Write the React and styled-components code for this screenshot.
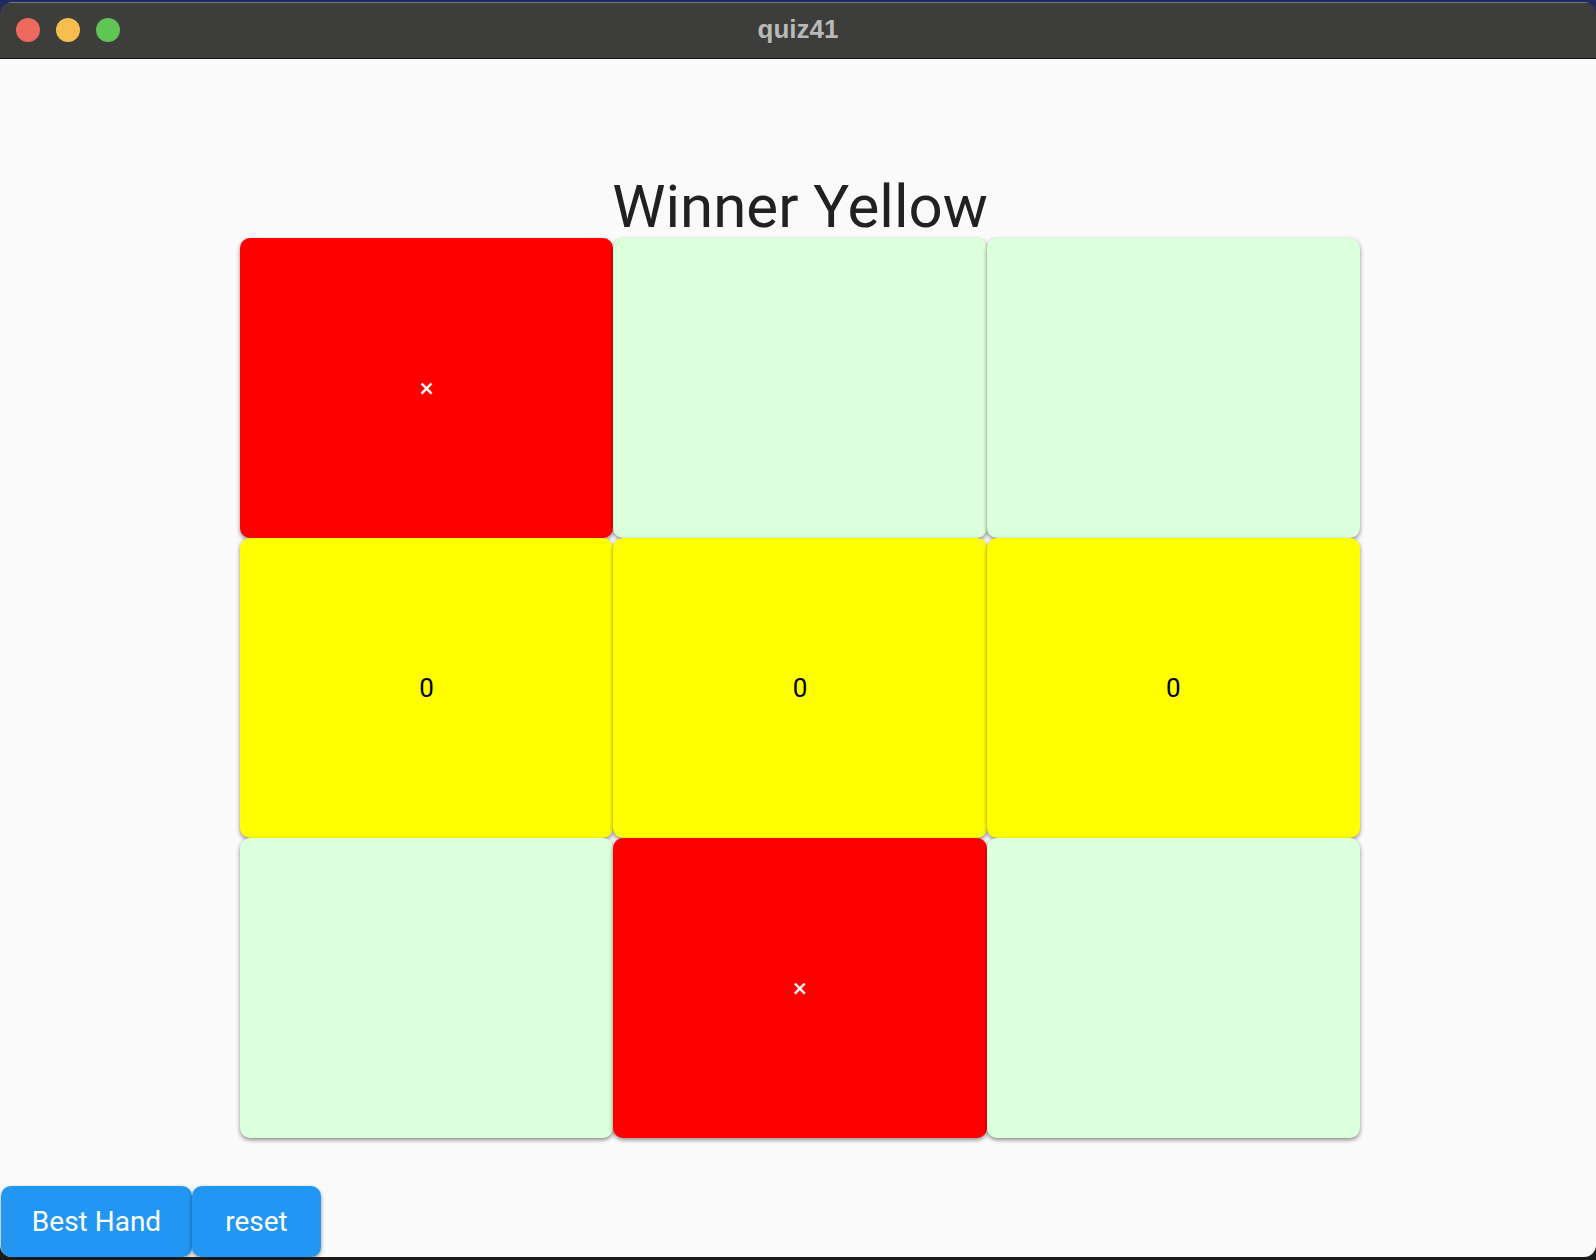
import React from 'react'
import styled, { createGlobalStyle } from 'styled-components'

const GlobalStyle = createGlobalStyle`
    html, body {
        margin: 0;
        padding: 0;
        width: 1596px;
        height: 1260px;
        overflow: hidden;
        background: linear-gradient(#1d2b62 0 40px, #1b1b1b 40px);
    }
`

const board = [
    ['x', null, null],
    ['o', 'o', 'o'],
    [null, 'x', null],
]

const Window = styled.div`
    margin-top: 2px;
    height: 1255px;
    display: flex;
    flex-direction: column;
    border-radius: 12px;
    overflow: hidden;
`

const TitleBar = styled.div`
    position: relative;
    height: 55px;
    flex-shrink: 0;
    background: #3d3d3b;
    border-top: 1px solid #777;
    border-bottom: 1px solid #0e0e0e;
    display: flex;
    align-items: center;
    justify-content: center;
`

const Lights = styled.div`
    position: absolute;
    left: 16px;
    top: 15px;
    display: flex;
    gap: 16px;
`

const Light = styled.span`
    width: 24px;
    height: 24px;
    border-radius: 50%;
    background: ${({ color }) => color};
`

const WindowTitle = styled.span`
    font-family: "Liberation Sans", Arial, sans-serif;
    font-weight: bold;
    font-size: 26px;
    color: #b9b9b9;
    margin-top: -3px;
`

const Content = styled.main`
    flex: 1;
    background: #fafafa;
    display: flex;
    flex-direction: column;
    font-family: Roboto, "Noto Sans", sans-serif;
`

const Game = styled.section`
    padding: 117px 0 0 4px;
    display: flex;
    flex-direction: column;
    align-items: center;
`

const Heading = styled.h1`
    margin: 0;
    font-weight: 400;
    font-size: 60px;
    line-height: 62px;
    color: #212121;
`

const Grid = styled.div`
    width: 1120px;
    display: grid;
    grid-template-columns: repeat(3, 1fr);
    grid-auto-rows: 300px;
`

const tileColors = {
    x: '#ff0000',
    o: '#ffff00',
    empty: '#dcffdc',
}

const Tile = styled.div`
    background: ${({ mark }) => tileColors[mark || 'empty']};
    border-radius: 10px;
    box-shadow: 0 2px 4px rgba(0, 0, 0, 0.45);
    display: flex;
    align-items: center;
    justify-content: center;
    font-size: 26px;
    color: ${({ mark }) => (mark === 'x' ? '#ffffff' : '#000000')};
`

const ButtonBar = styled.div`
    margin-top: auto;
    display: flex;
    padding-left: 1px;
`

const Button = styled.button`
    width: ${({ width }) => width}px;
    height: 71px;
    padding: 0;
    border: none;
    border-radius: 10px;
    background: #2196f3;
    color: #ffffff;
    font-family: Roboto, "Noto Sans", sans-serif;
    font-size: 28px;
    box-shadow: 0 2px 4px rgba(0, 0, 0, 0.4);
    cursor: pointer;
`

const App = () => {
    return (
        <>
            <GlobalStyle />
            <Window>
                <TitleBar>
                    <Lights>
                        <Light color='#ee6a5f' />
                        <Light color='#f5be4f' />
                        <Light color='#61c554' />
                    </Lights>
                    <WindowTitle>quiz41</WindowTitle>
                </TitleBar>
                <Content>
                    <Game>
                        <Heading>Winner Yellow</Heading>
                        <Grid>
                            {board.flat().map((mark, i) => (
                                <Tile key={i} mark={mark}>
                                    {mark === 'x' ? '×' : mark === 'o' ? '0' : ''}
                                </Tile>
                            ))}
                        </Grid>
                    </Game>
                    <ButtonBar>
                        <Button width={191}>Best Hand</Button>
                        <Button width={129}>reset</Button>
                    </ButtonBar>
                </Content>
            </Window>
        </>
    )
}

export default App
